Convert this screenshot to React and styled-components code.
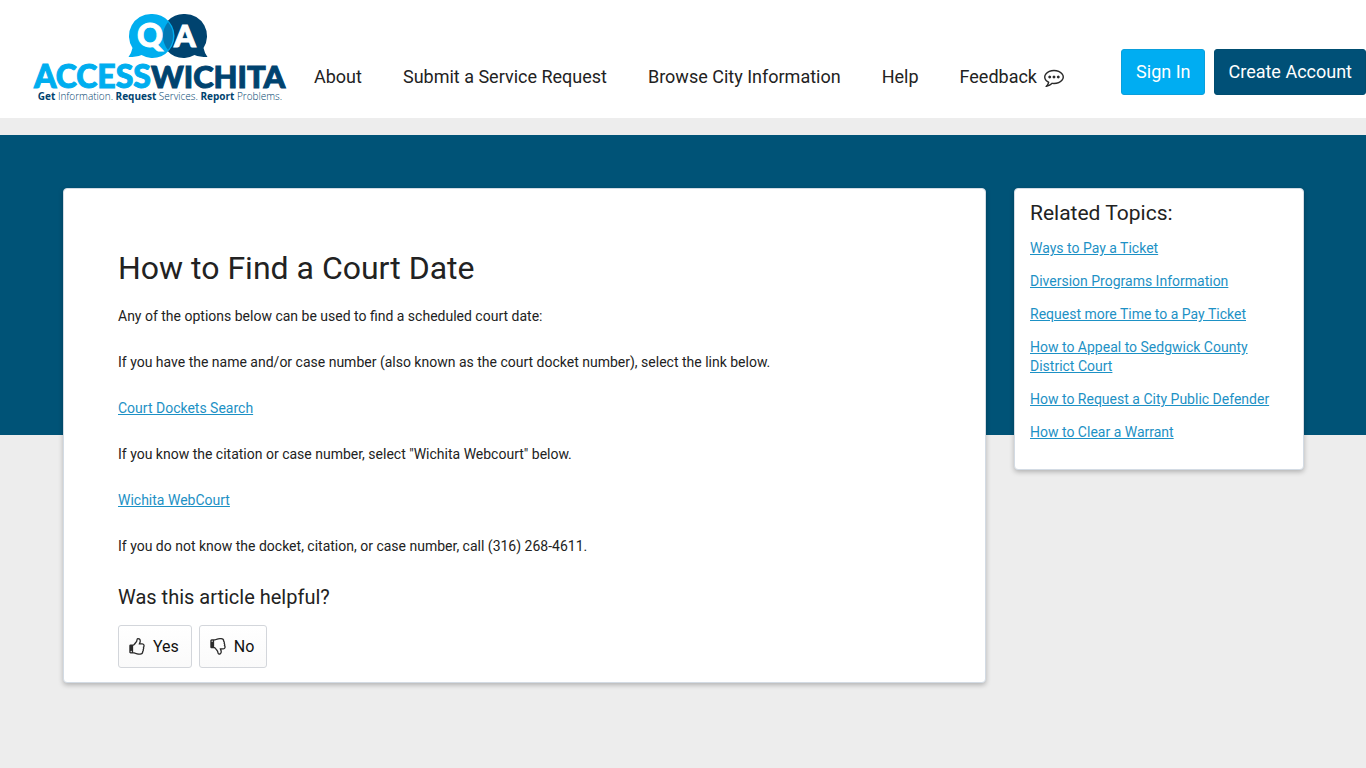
import React, { useState } from 'react';
import styled, { createGlobalStyle } from 'styled-components';

const navItems = ['About', 'Submit a Service Request', 'Browse City Information', 'Help'];

const relatedTopics = [
  'Ways to Pay a Ticket',
  'Diversion Programs Information',
  'Request more Time to a Pay Ticket',
  'How to Appeal to Sedgwick County District Court',
  'How to Request a City Public Defender',
  'How to Clear a Warrant',
];

const ThumbIcon = ({ down }) => (
  <Icon width="18" height="18" viewBox="0 0 1792 1792" aria-hidden="true">
    <path
      transform={down ? 'matrix(1 0 0 -1 0 1664)' : undefined}
      d="M384 1344q0-26-19-45t-45-19-45 19-19 45 19 45 45 19 45-19 19-45zm1152-576q0-51-39-89.5t-89-38.5h-352q0-58 48-159.5t48-160.5q0-98-32-145t-128-47q-26 26-38 85t-30.5 125.5-59.5 109.5q-22 23-77 91-4 5-23 30t-31.5 41-34.5 42.5-40 44-38.5 35.5-40 27-35.5 9h-32v640h32q13 0 31.5 3t33 6.500 38 11 35 11.500 35.500 12.500 29 10.500q211 73 342 73h121q192 0 192-167 0-26-5-56 30-16 47.500-52.500t17.500-73.500-18-69q53-50 53-119 0-25-10-55.500t-25-47.500q32-1 53.500-47t21.500-81zm128-1q0 89-49 163 9 33 9 69 0 77-38 144 3 21 3 43 0 101-60 178 1 139-85 219.500t-227 80.500h-129q-96 0-189.500-22.500t-216.500-65.500q-116-40-138-40h-288q-53 0-90.500-37.500t-37.500-90.500v-640q0-53 37.500-90.500t90.500-37.500h274q36-24 137-155 58-75 107-128 24-25 35.500-85.500t30.500-126.500 62-108q39-37 90-37 84 0 151 32.500t102 101.500 35 186q0 93-48 192h176q104 0 180 76t76 179z"
    />
  </Icon>
);

const CommentIcon = () => (
  <Icon width="20" height="20" viewBox="0 0 1792 1792" aria-hidden="true">
    <path d="M640 896q0 53-37.5 90.5t-90.5 37.5-90.5-37.5-37.5-90.5 37.5-90.5 90.5-37.5 90.5 37.5 37.5 90.5zm384 0q0 53-37.5 90.5t-90.5 37.5-90.5-37.5-37.5-90.5 37.5-90.5 90.5-37.5 90.5 37.5 37.5 90.5zm384 0q0 53-37.5 90.5t-90.5 37.5-90.5-37.5-37.5-90.5 37.5-90.5 90.5-37.5 90.5 37.5 37.5 90.5zm-512-512q-204 0-381.5 69.5t-282 187.5-104.5 255q0 112 71.5 213.5t201.5 175.5l87 50-27 96q-24 91-70 172 152-63 275-171l43-38 57 6q69 8 130 8 204 0 381.5-69.5t282-187.5 104.5-255-104.5-255-282-187.5-381.5-69.5zm896 512q0 174-120 321.5t-326 233-450 85.5q-70 0-145-8-198 175-460 242-49 14-114 22h-5q-15 0-27-10.5t-16-27.5v-1q-3-4-.5-12t2-10 4.5-9.5l6-9 7-8.5 8-9q7-8 31-34.5t34.5-38 31-39.5 32.5-51 27-59 26-76q-157-89-247.5-220t-90.5-281q0-174 120-321.5t326-233 450-85.5 450 85.5 326 233 120 321.5z" />
  </Icon>
);

const Logo = () => (
  <LogoLink href="#home" aria-label="Access Wichita">
    <svg width="256" height="92" viewBox="32 12 256 92">
      <path fill="#00436f" d="M185 14a22 22 0 0 1 18.500 34q1 5 4 9-8 0-13-2a22 22 0 1 1-9.500-41z" />
      <path fill="#00aeef" d="M151 14a22 22 0 0 0-18.500 34q-1 5-4 9 8 0 13-2a22 22 0 1 0 9.500-41z" />
      <path fill="#0379b4" d="M168 22a22 22 0 0 1 0 28 22 22 0 0 1 0-28z" />
      <LogoText x="150" y="47" $size="32" $color="#fff" textAnchor="middle">Q</LogoText>
      <LogoText x="185" y="47" $size="31" $color="#fff" textAnchor="middle">A</LogoText>
      <LogoText x="151" y="88" $size="32" $color="#00aeef" textAnchor="end">ACCESS</LogoText>
      <LogoText x="151" y="88" $size="31" $color="#00436f">WICHITA</LogoText>
      <Tagline x="160" y="100">
        <tspan fontWeight="700">Get</tspan>
        {' Information. '}
        <tspan fontWeight="700">Request</tspan>
        {' Services. '}
        <tspan fontWeight="700">Report</tspan>
        {' Problems.'}
      </Tagline>
    </svg>
  </LogoLink>
);

const App = () => {
  const [vote, setVote] = useState(null);

  return (
    <>
      <GlobalStyle />
      <Header>
        <Logo />
        <Nav>
          {navItems.map((item) => (
            <NavLink key={item} href="#nav">{item}</NavLink>
          ))}
          <NavLink href="#feedback">
            Feedback
            <CommentIcon />
          </NavLink>
        </Nav>
        <Account>
          <AccountButton type="button">Sign In</AccountButton>
          <AccountButton type="button" $dark>Create Account</AccountButton>
        </Account>
      </Header>
      <Main>
        <Article>
          <Title>How to Find a Court Date</Title>
          <Body>
            <p>Any of the options below can be used to find a scheduled court date:</p>
            <p>
              If you have the name and/or case number (also known as the court docket number),
              {' '}
              select the link below.
            </p>
            <p><TextLink href="#dockets">Court Dockets Search</TextLink></p>
            <p>If you know the citation or case number, select "Wichita Webcourt" below.</p>
            <p><TextLink href="#webcourt">Wichita WebCourt</TextLink></p>
            <p>If you do not know the docket, citation, or case number, call (316) 268-4611.</p>
          </Body>
          <Question>Was this article helpful?</Question>
          <Votes>
            <VoteButton type="button" aria-pressed={vote === 'yes'} onClick={() => setVote('yes')}>
              <ThumbIcon />
              Yes
            </VoteButton>
            <VoteButton type="button" aria-pressed={vote === 'no'} onClick={() => setVote('no')}>
              <ThumbIcon down />
              No
            </VoteButton>
          </Votes>
        </Article>
        <Related>
          <RelatedTitle>Related Topics:</RelatedTitle>
          <RelatedList>
            {relatedTopics.map((topic) => (
              <li key={topic}><TextLink href="#topic">{topic}</TextLink></li>
            ))}
          </RelatedList>
        </Related>
      </Main>
    </>
  );
};

export default App;

const GlobalStyle = createGlobalStyle`
  * {
    box-sizing: border-box;
  }

  body {
    margin: 0;
    background-color: #ededed;
    color: #222;
    font-family: Roboto, "Liberation Sans", sans-serif;
    font-size: 14px;
  }

  h1, h2, p, ul {
    margin: 0;
    padding: 0;
    font-weight: 400;
  }

  button {
    font-family: inherit;
    cursor: pointer;
  }
`;

const Header = styled.header`
  display: flex;
  align-items: flex-start;
  min-height: 118px;
  padding-left: 32px;
  background-color: white;
`;

const LogoLink = styled.a`
  flex: none;
  margin-top: 12px;

  svg {
    display: block;
    overflow: visible;
  }
`;

const LogoText = styled.text`
  font-family: Lato, sans-serif;
  font-size: ${({ $size }) => $size}px;
  font-weight: 900;
  fill: ${({ $color }) => $color};
  stroke: ${({ $color }) => $color};
  stroke-width: 1px;
`;

const Tagline = styled.text`
  font-family: "Open Sans", sans-serif;
  font-size: 10px;
  font-weight: 300;
  text-anchor: middle;
  fill: #00436f;
`;

const Nav = styled.nav`
  display: flex;
  gap: 41px;
  margin: 66px 0 0 26px;
`;

const NavLink = styled.a`
  display: flex;
  align-items: center;
  gap: 7px;
  color: #222;
  font-size: 18px;
  line-height: 22px;
  text-decoration: none;
  white-space: nowrap;
`;

const Icon = styled.svg`
  flex: none;
  fill: #2a2a2a;
`;

const Account = styled.div`
  display: flex;
  gap: 9px;
  margin: 49px 0 0 auto;
`;

const AccountButton = styled.button`
  height: 46px;
  padding: 0 13px 2px 14px;
  border: 1px solid ${({ $dark }) => ($dark ? '#004d70' : '#0a9fdc')};
  border-radius: 3px;
  background-color: ${({ $dark }) => ($dark ? '#005077' : '#00adf2')};
  color: white;
  font-size: 18px;
  white-space: nowrap;
`;

const Main = styled.main`
  display: flex;
  align-items: flex-start;
  gap: 28px;
  margin-top: 17px;
  padding: 53px 62px 85px 63px;
  background: linear-gradient(#005377, #005377) no-repeat 0 0 / 100% 300px;
`;

const Card = styled.section`
  border: 1px solid #d3dbe4;
  border-radius: 4px;
  background-color: white;
  box-shadow: 0 2px 5px rgba(0, 0, 0, 0.25);
`;

const Article = styled(Card)`
  flex: 1;
  padding: 60px 54px 14px;
`;

const Title = styled.h1`
  font-size: 32px;
  line-height: 38px;
`;

const Body = styled.div`
  display: flex;
  flex-direction: column;
  gap: 26px;
  margin-top: 19px;
  line-height: 20px;
`;

const TextLink = styled.a`
  color: #1d91c5;
  text-decoration: underline;
`;

const Question = styled.h2`
  margin-top: 29px;
  font-size: 20px;
  line-height: 24px;
`;

const Votes = styled.div`
  display: flex;
  gap: 7px;
  margin-top: 16px;
`;

const VoteButton = styled.button`
  display: flex;
  align-items: center;
  gap: 7px;
  height: 43px;
  padding: 0 12px 0 9px;
  border: 1px solid #d3d6db;
  border-radius: 3px;
  background: linear-gradient(#fff, #fafafa);
  color: #111;
  font-size: 16px;
`;

const Related = styled(Card)`
  width: 290px;
  padding: 12px 15px 27px;
`;

const RelatedTitle = styled.h2`
  font-size: 21px;
  line-height: 24px;
`;

const RelatedList = styled.ul`
  display: flex;
  flex-direction: column;
  gap: 14px;
  margin-top: 14px;
  line-height: 19px;
  list-style: none;
`;
